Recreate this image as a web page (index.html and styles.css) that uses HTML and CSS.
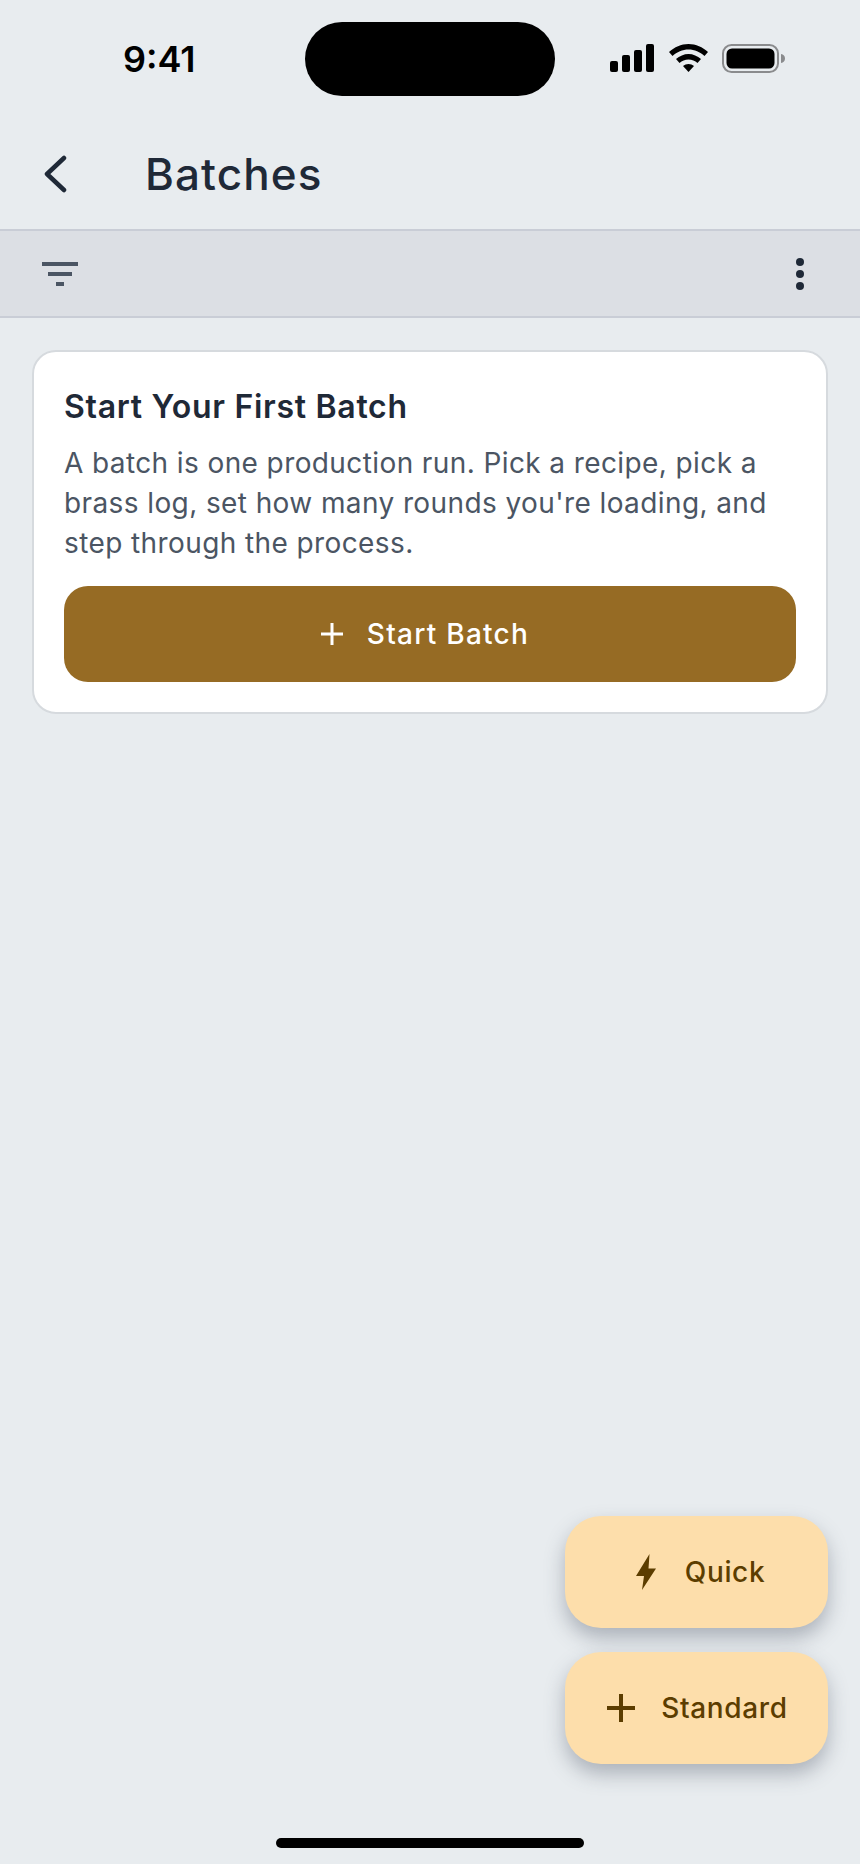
FILE: index.html
```html
<!DOCTYPE html>
<html lang="en">
<head>
    <meta charset="UTF-8">
    <meta name="viewport" content="width=device-width, initial-scale=1.0">
    <title>Batches</title>
    <link rel="stylesheet" href="styles.css">
</head>
<body>
    <div class="screen">
        <div class="status-bar">
            <div class="status-time">9:41</div>
            <div class="status-island"></div>
            <div class="status-icons">
                <svg class="icon-signal" width="44" height="28" viewBox="0 0 44 28">
                    <rect x="0" y="17" width="8" height="11" rx="2"/>
                    <rect x="12" y="11" width="8" height="17" rx="2"/>
                    <rect x="24" y="6" width="8" height="22" rx="2"/>
                    <rect x="36" y="0" width="8" height="28" rx="2"/>
                </svg>
                <svg class="icon-wifi" width="39" height="28" viewBox="0 0 39 28">
                    <path d="M19.5 0C12 0 5.5 3 0 8l3.5 4C8 8 13.5 5.5 19.5 5.5S31 8 35.5 12L39 8C33.5 3 27 0 19.5 0Z"/>
                    <path d="M19.5 10C15 10 10.5 12 7 15l3.5 4c2.5-2 5.5-3.5 9-3.5s6.5 1.5 9 3.5L32 15c-3.5-3-8-5-12.5-5Z"/>
                    <path d="M19.5 20c-2 0-4 .7-5.5 2l5.5 6 5.5-6c-1.5-1.3-3.5-2-5.5-2Z"/>
                </svg>
                <svg class="icon-battery" width="63" height="29" viewBox="0 0 63 29">
                    <rect x="1" y="1" width="55" height="27" rx="8.5" fill="none" stroke="#8a8b8d" stroke-width="2"/>
                    <rect x="4.5" y="4.5" width="48" height="20" rx="5.5"/>
                    <path d="M59 10c2.5.5 4 2 4 4.5S61.5 18.5 59 19Z" fill="#8a8b8d"/>
                </svg>
            </div>
        </div>

        <div class="app-header">
            <svg class="back-icon" width="24" height="40" viewBox="0 0 24 40">
                <path d="M20 4 3 20l17 16"/>
            </svg>
            <h1 class="app-title">Batches</h1>
        </div>

        <div class="toolbar">
            <svg class="filter-icon" width="36" height="24" viewBox="0 0 36 24">
                <rect x="0" y="0" width="36" height="4"/>
                <rect x="6" y="10" width="24" height="4"/>
                <rect x="14" y="20" width="8" height="4"/>
            </svg>
            <svg class="more-icon" width="8" height="32" viewBox="0 0 8 32">
                <circle cx="4" cy="4" r="4"/>
                <circle cx="4" cy="16" r="4"/>
                <circle cx="4" cy="28" r="4"/>
            </svg>
        </div>

        <div class="content">
            <div class="card">
                <h2 class="card-title">Start Your First Batch</h2>
                <p class="card-text">A batch is one production run. Pick a recipe, pick a brass log, set how many rounds you're loading, and step through the process.</p>
                <button class="start-button">
                    <svg class="plus-small" width="22" height="22" viewBox="0 0 22 22">
                        <path d="M11 0v22M0 11h22"/>
                    </svg>
                    <span>Start Batch</span>
                </button>
            </div>

            <div class="fab-group">
                <button class="fab fab-quick">
                    <svg class="bolt-icon" width="20" height="36" viewBox="0 0 20 36">
                        <path d="M13.5 0 0 22h8L6 36l14-21.5h-7.5Z"/>
                    </svg>
                    <span>Quick</span>
                </button>
                <button class="fab fab-standard">
                    <svg class="plus-big" width="28" height="28" viewBox="0 0 28 28">
                        <path d="M14 0v28M0 14h28"/>
                    </svg>
                    <span>Standard</span>
                </button>
            </div>
        </div>

        <div class="home-bar"><div class="home-indicator"></div></div>
    </div>
</body>
</html>
```

FILE: styles.css
```css
* {
    box-sizing: border-box;
}
body {
    margin: 0;
    background: #e8ecef;
    font-family: Inter, "Noto Sans", sans-serif;
}
.screen {
    width: 860px;
    height: 1864px;
    display: flex;
    flex-direction: column;
    overflow: hidden;
}
.status-bar {
    height: 118px;
    padding-top: 22px;
    display: flex;
    align-items: flex-start;
}
.status-time {
    width: 305px;
    padding: 15px 0 0 123px;
    font-size: 36px;
    line-height: 44px;
    font-weight: 600;
    color: #000;
}
.status-island {
    width: 250px;
    height: 74px;
    border-radius: 37px;
    background: #000;
}
.status-icons {
    display: flex;
    align-items: flex-start;
    padding: 22px 0 0 55px;
    gap: 14px;
}
.icon-wifi {
    margin-left: 1px;
}
.app-header {
    height: 113px;
    padding-left: 44px;
    display: flex;
    align-items: center;
    border-bottom: 2px solid #c9cdd6;
}
.back-icon {
    fill: none;
    stroke: #1f2937;
    stroke-width: 4.5;
    stroke-linecap: round;
    stroke-linejoin: round;
}
.app-title {
    margin: 0 0 0 77px;
    font-size: 44px;
    line-height: 52px;
    font-weight: 500;
    letter-spacing: 1.1px;
    color: #1f2937;
}
.toolbar {
    height: 87px;
    padding: 0 56px 0 42px;
    display: flex;
    align-items: center;
    justify-content: space-between;
    background: #dcdfe4;
    border-bottom: 2px solid #c9cdd6;
}
.filter-icon {
    fill: #4b5563;
}
.more-icon {
    fill: #1f2937;
}
.content {
    flex: 1;
    padding: 32px 32px 0 32px;
    display: flex;
    flex-direction: column;
}
.card {
    height: 364px;
    padding: 35px 29px 0 30px;
    background: #fff;
    border: 2px solid #d6dade;
    border-radius: 24px;
}
.card-title {
    margin: 0;
    font-size: 32px;
    line-height: 40px;
    font-weight: 600;
    letter-spacing: 0.7px;
    color: #1f2937;
}
.card-text {
    margin: 16px 0 0 0;
    font-size: 28px;
    line-height: 40px;
    letter-spacing: 0.4px;
    color: #4b5563;
}
.start-button {
    width: 732px;
    height: 96px;
    margin-top: 23px;
    padding: 0 10px 0 0;
    display: flex;
    align-items: center;
    justify-content: center;
    gap: 24px;
    border: none;
    border-radius: 24px;
    background: #966b24;
    color: #fff;
    font-family: inherit;
    font-size: 28px;
    font-weight: 500;
    letter-spacing: 1.25px;
}
.plus-small {
    fill: none;
    stroke: #fff;
    stroke-width: 3;
}
.fab-group {
    margin-top: auto;
    align-self: flex-end;
    display: flex;
    flex-direction: column;
    gap: 24px;
}
.fab {
    width: 263px;
    height: 112px;
    display: flex;
    align-items: center;
    justify-content: center;
    border: none;
    border-radius: 36px;
    background: #fddeab;
    color: #5c3d00;
    font-family: inherit;
    font-size: 28px;
    font-weight: 500;
    letter-spacing: 0.65px;
    box-shadow: 0 10px 20px rgba(60, 70, 85, 0.35);
}
.fab-quick {
    padding: 0 0 0 8px;
    gap: 29px;
}
.fab-standard {
    padding: 0 0 0 2px;
    gap: 26px;
}
.bolt-icon {
    fill: #5c3d00;
}
.plus-big {
    fill: none;
    stroke: #5c3d00;
    stroke-width: 4;
}
.home-bar {
    height: 100px;
    padding-top: 74px;
    display: flex;
    justify-content: center;
}
.home-indicator {
    width: 308px;
    height: 10px;
    border-radius: 5px;
    background: #000;
}
```
